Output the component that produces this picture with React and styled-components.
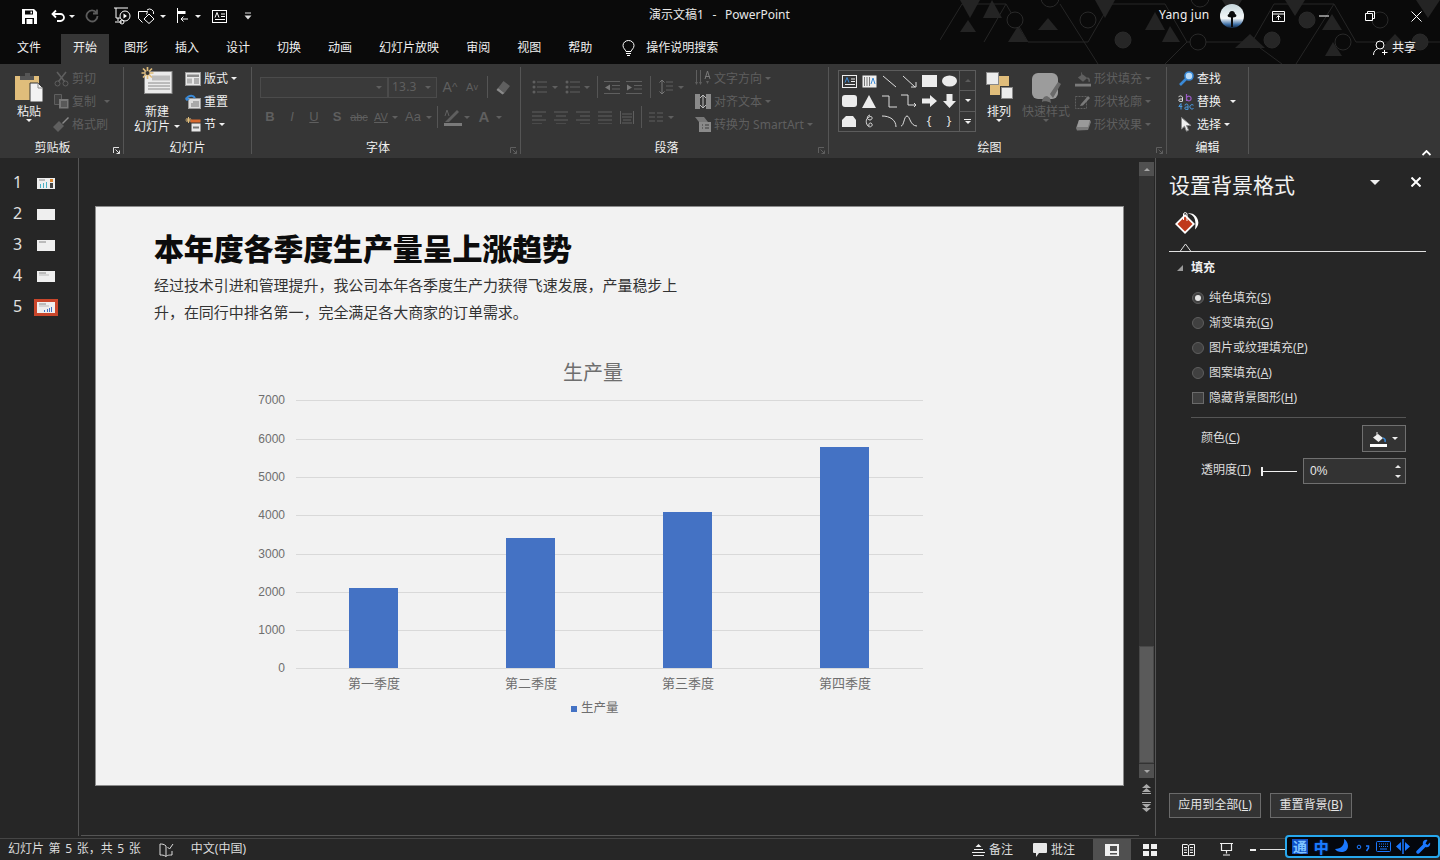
import React from 'react'
import styled, { createGlobalStyle } from 'styled-components'

const Global = createGlobalStyle`
  html, body { margin: 0; padding: 0; background: #262626; }
  * { box-sizing: border-box; }
  #root { width: 1440px; height: 860px; overflow: hidden; }
`;

const UI_FONT = `"Noto Sans", "Noto Sans CJK SC", sans-serif`;
const ON = '#f0f0f0';
const OFF = '#5f5f5f';

const Page = styled.div`
  position: relative;
  width: 1440px;
  height: 860px;
  display: flex;
  flex-direction: column;
  background: #262626;
  color: ${ON};
  font: 12px/16px ${UI_FONT};
  overflow: hidden;
`;

/* ---------- top bars ---------- */
const Top = styled.div`
  position: relative;
  height: 64px;
  background: #0a0a0a;
`;
const Pattern = styled.svg`
  position: absolute;
  left: 940px;
  top: 0;
`;
const TitleBar = styled.div`
  position: relative;
  height: 32px;
  display: flex;
  align-items: center;
`;
const Qat = styled.div`
  width: 649px;
  display: flex;
  align-items: center;
`;
const Slot = styled.div`
  flex: none;
  width: ${p => p.$w}px;
  margin-left: ${p => p.$ml || 0}px;
  display: flex;
  align-items: center;
  justify-content: center;
`;
const DocTitle = styled.div`
  white-space: pre;
  word-spacing: 1.2px;
  padding-bottom: 2px;
  color: #e8e8e8;
`;
const WinControls = styled.div`
  margin-left: auto;
  width: 281px;
  display: flex;
  align-items: center;
`;
const UserName = styled.div`
  width: 50px;
  white-space: nowrap;
  letter-spacing: 0.2px;
  padding-bottom: 2px;
`;
const TabRow = styled.div`
  position: relative;
  height: 32px;
  display: flex;
  align-items: flex-end;
  padding-left: 5px;
`;
const Tab = styled.div`
  height: 30px;
  line-height: 28px;
  padding: 0 12px;
  margin-right: ${p => p.$mr ?? 3}px;
  background: ${p => p.$active ? '#363636' : 'transparent'};
`;
const SearchTip = styled.div`
  height: 30px;
  display: flex;
  align-items: center;
  gap: 11px;
  margin-left: 15px;
  padding-bottom: 2px;
`;
const Share = styled.div`
  margin-left: auto;
  height: 30px;
  display: flex;
  align-items: center;
  gap: 4px;
  padding: 0 24px 2px 0;
`;

/* ---------- ribbon ---------- */
const Ribbon = styled.div`
  height: 94px;
  flex: none;
  background: #363636;
  padding-top: 3px;
  display: flex;
  align-items: flex-start;
`;
const Group = styled.div`
  position: relative;
  flex: none;
  width: ${p => p.$w}px;
  height: 87px;
  border-right: 1px solid #555555;
  display: flex;
  flex-direction: column;
`;
const GroupBody = styled.div`
  height: 69px;
  display: flex;
  padding-left: ${p => p.$pl || 0}px;
`;
const GroupLabel = styled.div`
  height: 18px;
  line-height: 24px;
  text-align: center;
  padding-right: ${p => p.$pr || 0}px;
  color: #f0f0f0;
`;
const Launcher = styled.svg`
  position: absolute;
  right: 3px;
  bottom: 0;
`;
const BigButton = styled.div`
  flex: none;
  width: ${p => p.$w}px;
  margin-left: ${p => p.$ml || 0}px;
  display: flex;
  flex-direction: column;
  align-items: center;
  color: ${p => p.$off ? OFF : ON};
`;
const BigIcon = styled.div`
  height: 37px;
  padding-top: ${p => p.$pt ?? 2}px;
`;
const BigText = styled.div`
  line-height: 15px;
  white-space: nowrap;
  display: flex;
  align-items: center;
  justify-content: center;
  gap: 4px;
`;
const SmallCol = styled.div`
  flex: none;
  margin-left: ${p => p.$ml || 0}px;
  display: flex;
  flex-direction: column;
`;
const SmallRow = styled.div`
  height: 23px;
  display: flex;
  align-items: center;
  white-space: nowrap;
  color: ${p => p.$off ? OFF : ON};
`;
const SmallIcon = styled.div`
  width: 16px;
  height: 16px;
  margin-right: 3px;
  display: flex;
  align-items: center;
  justify-content: center;
`;
const Caret = styled.i`
  flex: none;
  display: block;
  width: 0;
  height: 0;
  margin-left: ${p => p.$ml || 0}px;
  border-left: 3.5px solid transparent;
  border-right: 3.5px solid transparent;
  border-top: 3.5px solid ${p => p.$c || 'currentColor'};
`;
const CommandStack = styled.div`
  flex: none;
  width: ${p => p.$w}px;
  padding-top: 9px;
  color: ${OFF};
`;
const CommandRow = styled.div`
  height: 22px;
  margin-bottom: 8px;
  display: flex;
  align-items: center;
`;
const FontField = styled.div`
  width: ${p => p.$w}px;
  height: 21px;
  border: 1px solid #4b4b4b;
  background: #3a3a3a;
  display: flex;
  align-items: center;
  justify-content: flex-end;
  padding: 0 5px 0 3px;
  font-size: 12px;
`;
const FieldValue = styled.span`
  flex: 1;
  letter-spacing: 0.2px;
`;
const Glyph = styled.div`
  flex: none;
  width: ${p => p.$w || 22}px;
  margin-left: ${p => p.$ml || 0}px;
  display: flex;
  align-items: center;
  justify-content: center;
  font-family: "Liberation Sans", sans-serif;
  font-size: ${p => p.$size || 13}px;
  font-weight: ${p => p.$bold ? 700 : 400};
  font-style: ${p => p.$italic ? 'italic' : 'normal'};
  text-decoration: ${p => p.$line || 'none'};
`;
const VSep = styled.div`
  flex: none;
  width: 1px;
  height: 22px;
  margin: 0 ${p => p.$mr ?? 4}px 0 ${p => p.$ml ?? 4}px;
  background: #555555;
`;
const Gallery = styled.div`
  flex: none;
  width: 138px;
  height: 62px;
  margin: 3px 0 0 9px;
  border: 1px solid #5c5c5c;
  display: flex;
`;
const GalleryGrid = styled.div`
  flex: 1;
  display: grid;
  grid-template-columns: repeat(6, 20px);
  grid-auto-rows: 20px;
`;
const GalleryCell = styled.div`
  display: flex;
  align-items: center;
  justify-content: center;
  color: #e6e6e6;
  font-size: 12px;
  line-height: 12px;
`;
const GalleryScroll = styled.div`
  width: 16px;
  border-left: 1px solid #5c5c5c;
  display: flex;
  flex-direction: column;
`;
const GalleryBtn = styled.div`
  flex: 1;
  display: flex;
  flex-direction: column;
  gap: 1px;
  align-items: center;
  justify-content: center;
  color: ${p => p.$off ? '#5a5a5a' : '#f0f0f0'};
  border-bottom: ${p => p.$last ? 'none' : '1px solid #5c5c5c'};
`;
const CaretUp = styled(Caret)`
  border-top: none;
  border-bottom: 3.5px solid currentColor;
`;
const Bar = styled.i`
  display: block;
  width: 7px;
  height: 1px;
  background: currentColor;
`;
const RibbonEnd = styled.div`
  flex: 1;
  height: 91px;
  display: flex;
  align-items: flex-end;
  justify-content: flex-end;
  padding: 0 9px 2px 0;
`;

/* ---------- workspace ---------- */
const Workspace = styled.div`
  flex: none;
  height: 680px;
  display: flex;
`;
const Sidebar = styled.div`
  flex: none;
  width: 79px;
  height: 678px;
  border-right: 1px solid #555555;
  padding: 10px 0 0 13px;
`;
const ThumbRow = styled.div`
  height: 31px;
  display: flex;
  align-items: center;
`;
const ThumbNum = styled.div`
  width: 24px;
  padding-bottom: 3px;
  font-size: 16px;
  color: #e0e0e0;
`;
const Thumb = styled.div`
  width: 18px;
  height: 11px;
  background: #efefef;
  box-shadow: ${p => p.$active ? '0 0 0 3px #c9462b' : 'none'};
  display: flex;
`;
const Editor = styled.div`
  flex: none;
  width: 1077px;
  height: 678px;
  margin-bottom: 2px;
  border-right: 1px solid #555555;
  display: flex;
`;
const Canvas = styled.div`
  flex: 1;
  padding: 48px 0 0 16px;
  border-bottom: 1px solid #555555;
  margin-left: 2px;
`;
const Slide = styled.div`
  width: 1029px;
  height: 580px;
  margin-left: -2px;
  background: #f2f2f2;
  border: 1px solid #8c8c8c;
  padding: 20px 0 0 58px;
  color: #333333;
`;
const SlideTitle = styled.h1`
  margin: 0;
  font: 900 30px/40px "Noto Sans CJK SC", serif;
  letter-spacing: -0.15px;
  color: #0c0c0c;
`;
const SlideBody = styled.p`
  margin: 4px 0 0;
  width: 530px;
  font: 400 15px/27px "Noto Sans CJK SC", sans-serif;
  letter-spacing: -0.05px;
  color: #333333;
`;
const ChartBox = styled.svg`
  display: block;
  margin: 30px 0 0 86px;
`;
const ChartText = styled.text`
  font-family: ${p => p.$latin ? '"Liberation Sans"' : '"Noto Sans CJK SC"'}, sans-serif;
  font-size: ${p => p.$size || 12}px;
  fill: ${p => p.$fill || '#6e6e6e'};
  text-anchor: ${p => p.$anchor || 'middle'};
`;
const ScrollCol = styled.div`
  flex: none;
  width: 16px;
  padding-top: 4px;
  display: flex;
  flex-direction: column;
  align-items: flex-start;
`;
const ScrollBtn = styled.div`
  width: 15px;
  height: 14px;
  background: #505050;
  color: #a8a8a8;
  display: flex;
  align-items: center;
  justify-content: center;
`;
const ScrollTrack = styled.div`
  width: 15px;
  height: 588px;
  background: #333333;
  display: flex;
  flex-direction: column;
  justify-content: flex-end;
  padding-bottom: 1px;
`;
const ScrollThumb = styled.div`
  height: 117px;
  background: #5a5a5a;
  border: 1px solid #484848;
`;
const PageJump = styled.div`
  margin: ${p => p.$mt}px 0 0 3px;
  color: #a8a8a8;
  display: flex;
`;

/* ---------- format pane ---------- */
const Pane = styled.div`
  flex: 1;
  height: 680px;
  padding: 11px 14px 20px 13px;
  display: flex;
  flex-direction: column;
`;
const PaneHead = styled.div`
  height: 33px;
  display: flex;
  align-items: flex-start;
`;
const PaneTitle = styled.div`
  flex: 1;
  font-size: 21px;
  line-height: 32px;
  color: #f2f2f2;
`;
const PaneCaret = styled(Caret)`
  margin: 11px 31px 0 0;
  border-left-width: 5px;
  border-right-width: 5px;
  border-top-width: 5px;
  color: #f0f0f0;
`;
const PaneClose = styled.div`
  margin: 8px 5px 0 0;
  display: flex;
`;
const PaneTabs = styled.div`
  position: relative;
  height: 50px;
  padding: 9px 0 0 6px;
  border-bottom: 1px solid #e0e0e0;
`;
const Notch = styled.svg`
  position: absolute;
  left: 10px;
  bottom: -1px;
`;
const SectionHead = styled.div`
  height: 28px;
  padding: 4px 0 0 8px;
  display: flex;
  align-items: center;
  gap: 8px;
  font-weight: 700;
`;
const Options = styled.div`
  margin-top: 5px;
  padding-left: 23px;
`;
const Option = styled.label`
  height: 25px;
  display: flex;
  align-items: center;
  gap: 5px;
  color: #dcdcdc;
  white-space: nowrap;
`;
const Radio = styled.span`
  flex: none;
  width: 12px;
  height: 12px;
  border-radius: 50%;
  border: 1px solid #5e5e5e;
  background: #404040;
  display: flex;
  align-items: center;
  justify-content: center;
  &::after {
    content: '';
    width: 6px;
    height: 6px;
    border-radius: 50%;
    background: ${p => p.$on ? '#e4e4e4' : 'transparent'};
  }
`;
const Check = styled.span`
  flex: none;
  width: 12px;
  height: 12px;
  border: 1px solid #6a6a6a;
  background: #404040;
`;
const Acc = styled.span`
  text-decoration: underline;
  text-underline-offset: 1px;
`;
const PaneSep = styled.div`
  width: 215px;
  height: 1px;
  margin: 7px 0 0 22px;
  background: #555555;
`;
const FieldRow = styled.div`
  width: 205px;
  height: ${p => p.$h}px;
  margin: ${p => p.$mt}px 0 0 32px;
  display: flex;
  align-items: center;
  color: #dcdcdc;
`;
const FieldLabel = styled.div`
  width: ${p => p.$w}px;
  flex: none;
  white-space: nowrap;
  padding-bottom: 2px;
`;
const ColorBtn = styled.div`
  margin-left: auto;
  width: 44px;
  height: 27px;
  background: #333333;
  border: 1px solid #707070;
  display: flex;
  align-items: center;
  justify-content: center;
  gap: 5px;
  color: #f0f0f0;
`;
const Spin = styled.div`
  flex: none;
  width: 103px;
  height: 26px;
  margin-left: 6px;
  background: #333333;
  border: 1px solid #707070;
  padding: 0 4px 0 6px;
  display: flex;
  align-items: center;
  justify-content: space-between;
  font-family: "Liberation Sans", sans-serif;
  color: #e8e8e8;
`;
const SpinArrows = styled.div`
  display: flex;
  flex-direction: column;
  gap: 7px;
`;
const PaneFoot = styled.div`
  margin-top: auto;
  display: flex;
  gap: 9px;
`;
const FootBtn = styled.div`
  width: ${p => p.$w}px;
  height: 25px;
  line-height: 22px;
  text-align: center;
  border: 1px solid #6a6a6a;
  background: #333333;
  color: #e4e4e4;
  white-space: nowrap;
`;

/* ---------- status bar ---------- */
const Status = styled.div`
  flex: none;
  height: 22px;
  border-top: 1px solid #454545;
  padding-left: 8px;
  display: flex;
  align-items: center;
  color: #dcdcdc;
`;
const StatusLeft = styled.div`
  white-space: pre;
  word-spacing: 1.5px;
  padding-bottom: 1px;
`;
const Lang = styled(StatusLeft)`
  margin-left: 16px;
`;
const StatusRight = styled.div`
  margin-left: auto;
  width: 468px;
  height: 100%;
  display: flex;
  align-items: center;
`;
const StatusAction = styled.div`
  flex: none;
  width: ${p => p.$w}px;
  display: flex;
  align-items: center;
  gap: 4px;
`;
const ViewBtn = styled.div`
  flex: none;
  width: 38px;
  height: 100%;
  background: ${p => p.$active ? '#505050' : 'transparent'};
  display: flex;
  align-items: center;
  justify-content: center;
`;
const ZoomBar = styled.div`
  display: flex;
  align-items: center;
  gap: 4px;
  margin-left: 5px;
`;
const ZoomMinus = styled.i`
  display: block;
  width: 6px;
  height: 2px;
  background: #f0f0f0;
`;
const ZoomLine = styled.i`
  display: block;
  width: 30px;
  height: 1px;
  background: #e0e0e0;
`;
const Ime = styled.div`
  position: absolute;
  right: 0;
  bottom: 2px;
  width: 155px;
  height: 23px;
  background: #04070d;
  border: 2px solid #27a8ee;
  border-radius: 4px;
  display: flex;
  align-items: center;
  justify-content: space-between;
  padding: 0 7px 0 5px;
  color: #1a78ff;
`;
const ImeMode = styled.span`
  width: 16px;
  height: 15px;
  background: #0f4fc4;
  color: #7ec4ff;
  font: 700 14px/15px "Noto Sans CJK SC", sans-serif;
  text-align: center;
`;
const ImeText = styled.span`
  font: 700 15px/15px "Noto Sans CJK SC", sans-serif;
  color: #1a7cff;
  text-shadow: 0 0 2px #0a4ac0;
`;

/* ---------- icons ---------- */
const Ico = ({ w = 16, h = 16, vb, children, ...rest }) => (
  <svg width={w} height={h} viewBox={vb || `0 0 ${w} ${h}`} fill="none" style={{ display: 'block' }} {...rest}>{children}</svg>
);

const Save = () => (
  <Ico w={15} h={15}>
    <path d="M0 0h12l3 3v12H0z" fill="#fff" />
    <path d="M3 1.500h8v4H3zM3 9h9v6H3z" fill="#0a0a0a" />
    <path d="M8.500 2.500h1.500v2H8.500zM4.500 10h6v5h-6z" fill="#fff" />
  </Ico>
);
const Undo = ({ c = '#fff' }) => (
  <Ico w={15} h={14}>
    <path d="M5 1.500 1.500 5 5 8.500M2 5h7.500a3.500 3.500 0 0 1 0 7H6" stroke={c} strokeWidth="1.800" />
  </Ico>
);
const Redo = () => (
  <Ico w={14} h={14}>
    <path d="M11.500 3.800A5.500 5.500 0 1 0 12.500 7M12 0.500V4.500H8" stroke="#5c5c5c" strokeWidth="1.800" />
  </Ico>
);
const Present = () => (
  <Ico w={17} h={18}>
    <path d="M0 1h14M2 1v10h4M4 11v3M1 15h7" stroke="#fff" />
    <circle cx="11" cy="9" r="5" stroke="#fff" />
    <path d="M9.500 6.500 13 9l-3.500 2.500z" fill="#fff" />
    <circle cx="8" cy="15" r="2" stroke="#fff" />
  </Ico>
);
const ShapeMix = () => (
  <Ico w={18} h={16}>
    <path d="M0.500 3.500h9l-1 3M4.500 14.500 0.500 10.500V3.500" stroke="#fff" />
    <path d="m11 6 5 5-5 4.500-5-4.500z" stroke="#fff" />
    <path d="M9 2a4 4 0 0 1 6.500 4" stroke="#fff" />
  </Ico>
);
const AlignIco = () => (
  <Ico w={14} h={16}>
    <path d="M1.500 0v15" stroke="#fff" />
    <path d="M1.500 3h8v3h-8z" fill="#fff" />
    <path d="M12 11H5M7.500 8.500 5 11l2.500 2.500" stroke="#fff" />
  </Ico>
);
const TextBoxIco = ({ c = '#fff', a = '#fff' }) => (
  <Ico w={15} h={13}>
    <rect x="0.500" y="0.500" width="14" height="12" stroke={c} />
    <path d="M3 7.500 5 2.500l2 5" stroke={a} />
    <path d="M9 4h4M9 6.500h4M3 9.500h10" stroke={c} />
  </Ico>
);
const Customize = () => (
  <Ico w={8} h={8}>
    <path d="M1 1h6" stroke="#ddd" />
    <path d="M0.500 3.500h7L4 7.500z" fill="#ddd" />
  </Ico>
);
const Avatar = () => (
  <Ico w={24} h={24}>
    <defs>
      <linearGradient id="sky" x1="0" y1="0" x2="0" y2="1">
        <stop offset="0" stopColor="#c8d8de" />
        <stop offset="0.6" stopColor="#f4f7f8" />
        <stop offset="0.85" stopColor="#3e6fa6" />
        <stop offset="1" stopColor="#10233c" />
      </linearGradient>
    </defs>
    <circle cx="12" cy="12" r="12" fill="url(#sky)" />
    <path d="M12 7c2 0 3 1.500 3 3 1.500.5 2 2 .5 3l-2.500.5V23h-2v-9.500L8.500 13c-1.500-1-1-2.500.5-3 0-1.500 1-3 3-3z" fill="#0b0b0b" />
  </Ico>
);
const RibbonOpts = () => (
  <Ico w={13} h={11}>
    <path d="M.5.5h12v10H.5zM.5 3h12" stroke="#fff" />
    <path d="M6.500 9V4.500M4.500 6.500l2-2 2 2" stroke="#fff" />
  </Ico>
);
const Minimize = () => <Ico w={10} h={2}><path d="M0 1h10" stroke="#fff" /></Ico>;
const Restore = () => (
  <Ico w={10} h={10}>
    <path d="M.5 2.500h7v7h-7zM2.500 2.500V.5h7v7h-2" stroke="#fff" />
  </Ico>
);
const CloseX = ({ s = 10, sw = 1, c = '#fff' }) => (
  <Ico w={s} h={s}>
    <path d={`M.5.5l${s - 1} ${s - 1}M${s - .5} .5l-${s - 1} ${s - 1}`} stroke={c} strokeWidth={sw} />
  </Ico>
);
const Bulb = () => (
  <Ico w={13} h={17}>
    <path d="M4 11.500C3.500 9.500 1 8.500 1 5.500a5.500 5 0 0 1 11 0c0 3-2.500 4-3 6z" stroke="#fff" />
    <path d="M4 13.500h5M5 15.500h3" stroke="#fff" />
  </Ico>
);
const ShareIco = () => (
  <Ico w={15} h={16}>
    <circle cx="7" cy="5" r="4" stroke="#fff" />
    <path d="M.5 15c0-3.500 2-5.500 4-6M11.500 10v5M9 12.500h5.500" stroke="#fff" />
  </Ico>
);
const Launch = ({ c = '#e0e0e0' }) => (
  <Launcher width="7" height="7" viewBox="0 0 7 7" fill="none">
    <path d="M.5 6V.5H6" stroke={c} />
    <path d="M2.500 2.500 6.500 6.500M6.500 3.500v3h-3" stroke={c} />
  </Launcher>
);
const Paste = () => (
  <Ico w={28} h={30}>
    <path d="M0 4h10V1.500h5V4h9v24H0z" fill="#e0bd7b" />
    <path d="M5 4h14v4H5z" fill="#555" />
    <path d="M10 1h5v3h-5z" fill="#555" />
    <path d="M15 11h8l5 5v14H15z" fill="#f2f2f2" stroke="#363636" />
    <path d="M23 11v5h5" stroke="#888" />
  </Ico>
);
const Scissors = ({ c = OFF }) => (
  <Ico w={15} h={16}>
    <circle cx="3.500" cy="12.500" r="2.500" stroke={c} />
    <circle cx="11.500" cy="12.500" r="2.500" stroke={c} />
    <path d="M4.500 10.500 12 1M10.500 10.500 3 1" stroke={c} strokeWidth="1.600" />
  </Ico>
);
const CopyIco = ({ c = OFF }) => (
  <Ico w={15} h={15}>
    <path d="M.5.5h7v10h-7z" stroke={c} fill={c} fillOpacity=".25" />
    <path d="M5 5h9.500v9.500H5z" fill="#777" />
    <path d="M7 8h6M7 10h6M7 12h6" stroke="#3a3a3a" />
  </Ico>
);
const Brush = ({ c = OFF }) => (
  <Ico w={16} h={15}>
    <path d="M0 10 6 4l5 5-6 6z" fill={c} />
    <path d="m9 6 6-6 1 1-6 6z" fill="#8a8a8a" />
  </Ico>
);
const NewSlide = () => (
  <Ico w={32} h={28}>
    <rect x="3.500" y="4.500" width="27.500" height="22" fill="#ebebeb" stroke="#888" />
    <path d="M11 8.500h18v5H11z" fill="#bdbdbd" />
    <path d="M7 16h22M7 19h22M7 22h22" stroke="#8a8a8a" />
    <path d="M6.500 0v12M.5 6h12M2 1.500l9 9M11 1.500l-9 9" stroke="#e0bd7b" strokeWidth="1.700" />
    <circle cx="6.500" cy="6" r="2" fill="#363636" />
  </Ico>
);
const Layout = () => (
  <Ico w={16} h={14}>
    <rect x=".5" y=".5" width="15" height="13" fill="#e8e8e8" stroke="#999" />
    <path d="M2 2.500h12V5H2z" fill="#8a8a8a" />
    <path d="M2 6.500h5v5H2z" fill="#b5b5b5" />
    <path d="M9 7h5M9 9h5M9 11h5" stroke="#777" />
  </Ico>
);
const ResetIco = () => (
  <Ico w={16} h={15}>
    <rect x="3.500" y="4.500" width="12" height="10" fill="#dcdcdc" stroke="#999" />
    <path d="M8 8h6M6 10h8M6 12h8" stroke="#777" />
    <path d="M1.500 6A4.500 4 0 0 1 10 4" stroke="#3a8ad8" strokeWidth="2" />
    <path d="M0 3.500 1.500 7 5 5.500z" fill="#3a8ad8" />
  </Ico>
);
const SectionIco = () => (
  <Ico w={16} h={15}>
    <path d="M3.500 0v6M.5 3h6M1.500 1l4 4M5.500 1l-4 4" stroke="#e0bd7b" />
    <rect x="5.500" y="2.500" width="10" height="3" fill="#d9692e" />
    <rect x="6.500" y="6.500" width="9" height="8" fill="#e8e8e8" />
    <path d="M8 10.500h6" stroke="#777" strokeWidth="2" />
  </Ico>
);
const Eraser = ({ c = OFF }) => (
  <Ico w={16} h={16}>
    <path d="M8.500 2 15 7l-5.500 7L3 9z" fill={c} />
    <path d="m3 9 6.500 5-2 1.500L1.500 11z" fill="#8a8a8a" />
  </Ico>
);
const Underbar = ({ c = OFF }) => (
  <Ico w={18} h={17}>
    <path d="M3 11 13 1l2 2L5 13H1z" fill={c} />
    <path d="M0 14h18v3H0z" fill="#7a7a7a" />
    <path d="M1 7 3 1l2 6" stroke={c} />
  </Ico>
);
const Lines = ({ d, w = 14, h = 13, c = OFF }) => <Ico w={w} h={h}><path d={d} stroke={c} /></Ico>;
const Bullets = ({ c = OFF }) => (
  <Ico w={15} h={14}>
    <circle cx="2" cy="2" r="1.500" fill={c} />
    <circle cx="2" cy="7" r="1.500" fill={c} />
    <circle cx="2" cy="12" r="1.500" fill={c} />
    <path d="M5 2h10M5 7h10M5 12h10" stroke={c} />
  </Ico>
);
const Indent = ({ flip }) => (
  <Ico w={16} h={13}>
    <path d="M0 .5h16M8 4.500h8M8 8h8M0 12.500h16" stroke={OFF} />
    <path d={flip ? 'M1 3.500v6l5-3z' : 'M6 3.500v6L1 6.500z'} fill="#777" />
  </Ico>
);
const LineSpace = () => (
  <Ico w={14} h={16}>
    <path d="M3 1v14M.5 3.500 3 1l2.500 2.500M.5 12.500 3 15l2.500-2.500" stroke="#777" />
    <path d="M7 3h7M7 7h7M7 11h7" stroke={OFF} />
  </Ico>
);
const TextDir = () => (
  <Ico w={16} h={17}>
    <path d="M1.500 0v12M5.500 0v12" stroke={OFF} />
    <path d="M10 9 12.500 1 15 9M10.500 6.500h4" stroke="#7a7a7a" />
    <path d="M0 12l1.500 3 1.500-3zM4 12l1.500 3 1.500-3zM11 11l1.500 3 1.500-3z" fill={OFF} />
  </Ico>
);
const AlignText = () => (
  <Ico w={16} h={15}>
    <path d="M0 0h5v15H0zM11 0h5v15h-5z" fill="#8a8a8a" />
    <path d="M8 1v13M5 4 8 1l3 3M5 11l3 3 3-3" stroke="#bdbdbd" />
  </Ico>
);
const Smart = () => (
  <Ico w={16} h={15}>
    <path d="M0 0h9l4 5H4z" fill="#777" />
    <path d="M4 5h12v10H4z" fill="#8a8a8a" />
    <path d="M7 8h1M7 11h1M10 8h4M10 11h4" stroke="#3a3a3a" />
  </Ico>
);
const BucketSmall = ({ c = OFF, bar = '#7a7a7a', drop = c }) => (
  <Ico w={17} h={16}>
    <path d="M7 1v4" stroke={c} />
    <path d="M3 6.500 8 3l5 4-4.500 4z" fill={c} />
    <path d="M13 7c2 .5 2.500 2 2 4" stroke={drop} strokeWidth="1.500" />
    <path d="M0 13h17v3H0z" fill={bar} />
  </Ico>
);
const Pen = () => (
  <Ico w={16} h={15}>
    <path d="M.5 2.500h11v12H.5z" stroke={OFF} strokeDasharray="2 1" />
    <path d="M6 10 13 2l2 2-7 7.500-3 .5z" fill="#7a7a7a" />
  </Ico>
);
const Effect = () => (
  <Ico w={15} h={12}>
    <path d="M3 1h11l1 2-3 8-11 .5L0 9z" fill="#7a7a7a" />
    <path d="M3 1h11l-2 7H1z" fill="#9a9a9a" />
  </Ico>
);
const Arrange = () => (
  <Ico w={27} h={28}>
    <rect x=".5" y=".5" width="12" height="12" fill="#ececec" stroke="#8a8a8a" />
    <rect x="13" y="4" width="10" height="10" fill="#e0bd7b" />
    <rect x="4" y="13" width="10" height="10" fill="#e0bd7b" />
    <rect x="15.500" y="15.500" width="11" height="11" fill="#ececec" stroke="#8a8a8a" />
  </Ico>
);
const QuickStyle = () => (
  <Ico w={30} h={30}>
    <rect x="1" y="0" width="26" height="26" rx="6" fill="#9c9c9c" />
    <path d="M20 30c-3-2-8-2-9-1 0-3 2-6 5-6l3 2zM19 21 27 9l3 2-8 14z" fill="#6a6a6a" />
  </Ico>
);
const Finder = () => (
  <Ico w={15} h={15}>
    <circle cx="10" cy="5" r="4" fill="#bcdcf7" stroke="#3a8ad8" strokeWidth="1.600" />
    <path d="M7 8 1 14" stroke="#3a8ad8" strokeWidth="2.600" />
  </Ico>
);
const ReplaceIco = () => (
  <Ico w={16} h={16}>
    <path d="M.5 3.200a2.200 2.200 0 0 1 4 0v4M4.500 5H2a1.200 1.200 0 0 0 0 2.400h2.500" stroke="#dcdcdc" />
    <path d="M8.500 0v7M8.500 4.500a2.300 2.300 0 1 1 0 .1" stroke="#9a5cc6" strokeWidth="1.200" />
    <path d="M3 9.500.8 12.500h3.500M3 9.500v6" stroke="#4a9ae0" />
    <path d="M7 11.500a1.500 1.500 0 0 1 3 0v4M10 13H8a1.200 1.200 0 0 0 0 2.400h2" stroke="#4a9ae0" />
    <path d="M15.500 11.200a2.200 2.200 0 1 0 0 3.300" stroke="#4a9ae0" />
  </Ico>
);
const Pointer = () => (
  <Ico w={11} h={15}>
    <path d="M.5.500v11.500l3-2.800 2 5 2-1-2-4.700h4.500z" fill="#f0f0f0" stroke="#8a8a8a" />
  </Ico>
);
const Bucket = () => (
  <Ico w={24} h={23}>
    <path d="M10 3 20 13 10 23 0 13z" fill="#fff" />
    <path d="M10 5.500 17.500 13 10 20.500 2.500 13z" fill="#c0391b" />
    <path d="M8.500 9V3a1.800 1.800 0 0 1 3.500 0v7" stroke="#fff" />
    <path d="M13 2.500c5 .5 9 5 7 16 3-3 4-6 3-9-1-4-5-8-10-7z" fill="#fff" />
  </Ico>
);
const DoubleUp = () => (
  <Ico w={9} h={11}>
    <path d="M4.500 0 9 4H0zM4.500 4 9 8H0z" fill="currentColor" />
    <path d="M0 9.500h9" stroke="currentColor" />
  </Ico>
);
const DoubleDown = () => (
  <Ico w={9} h={11}>
    <path d="M0 1.500h9" stroke="currentColor" />
    <path d="M0 3h9L4.500 7zM0 7h9l-4.500 4z" fill="currentColor" />
  </Ico>
);
const Slider = () => (
  <Ico w={36} h={9}>
    <path d="M1 4.500h35" stroke="#f0f0f0" />
    <path d="M1 0v9" stroke="#f0f0f0" strokeWidth="2" />
  </Ico>
);
const Proof = () => (
  <Ico w={15} h={14}>
    <path d="M7 3C5 1 3 1 1 1v11c2 0 4 0 6 1.500M7 3v10.500M7 13.500c1-1 2-1.500 6-1.500V8" stroke="#dcdcdc" />
    <path d="m8.500 4 2 2 3.500-5" stroke="#dcdcdc" />
  </Ico>
);
const NotesIco = () => (
  <Ico w={13} h={12}>
    <path d="m6.500 0 3 3h-6z" fill="#f0f0f0" />
    <path d="M2 5.500h9M0 8.500h13M1 11.500h11" stroke="#f0f0f0" />
  </Ico>
);
const CommentIco = () => (
  <Ico w={14} h={14}>
    <path d="M1 0h12a1 1 0 0 1 1 1v8a1 1 0 0 1-1 1H6l-3 4v-4H1a1 1 0 0 1-1-1V1a1 1 0 0 1 1-1z" fill="#e8e8e8" />
  </Ico>
);
const NormalView = () => (
  <Ico w={14} h={12}>
    <path d="M0 0h14v12H0z" fill="#f0f0f0" />
    <path d="M5 2h7v5H5zM5 9h7v1.500H5z" fill="#505050" />
  </Ico>
);
const SorterView = () => (
  <Ico w={14} h={12}>
    <path d="M0 0h6v5H0zM8 0h6v5H8zM0 7h6v5H0zM8 7h6v5H8z" fill="#f0f0f0" />
  </Ico>
);
const ReadingView = () => (
  <Ico w={13} h={12}>
    <path d="M.5.5h4.500l1.500 1 1.500-1H12.500v11H8l-1.500.5L5 11.500H.5zM6.500 1.500V12" stroke="#f0f0f0" />
    <path d="M2 3.500h3M2 6h3M2 8.500h3M8 3.500h3M8 6h3M8 8.500h3" stroke="#f0f0f0" />
  </Ico>
);
const ShowView = () => (
  <Ico w={13} h={13}>
    <path d="M0 .5h13M1.500.5v7h10v-7M6.500 7.500v3M3 12h7" stroke="#f0f0f0" strokeWidth="1.200" />
  </Ico>
);

const patternCircles = [
  [75, 20, 8, 0], [148, 20, 8, 0], [183, 40, 8, 1], [258, 42, 8, 0], [332, 40, 8, 1], [367, 20, 8, 1],
  [403, 42, 8, 0], [440, 20, 8, 0], [110, -2, 9, 0], [260, -2, 9, 0], [480, 42, 8, 1],
];
const patternTris = [
  '43,18 62,18 52,0', '68,42 88,42 78,26', '20,0 40,0 30,18', '98,30 118,30 108,18',
  '155,0 175,0 165,18', '205,30 225,30 215,12', '282,0 302,0 292,16', '222,42 240,42 230,26',
  '345,0 365,0 355,16', '382,30 402,30 392,14', '295,48 325,48 310,34', '385,56 402,56 393,42', '440,50 470,50 455,34', '476,0 500,0 488,18', '20,32 36,32 28,20',
];
const patternLines = 'M0 40 22 4M22 4h44M66 4 88 42M88 42h60M148 42 170 4M170 4h55M225 4l22 38M247 42h65M312 42 334 4M334 4h60M394 4l22 38M416 42h84M44 42 66 4M120 4 158 64M225 64 247 42M312 42l30 22M394 4 356 64';

const tabs = ['图形', '插入', '设计', '切换', '动画', '幻灯片放映', '审阅', '视图', '帮助'];

const gallery = [
  <TextBoxIco c="#eee" a="#3a8ad8" />,
  <Ico w={15} h={13}><rect x=".5" y=".5" width="14" height="12" fill="#eee" /><path d="M2.500 2v9M5 2v9M7.500 2v9" stroke="#777" /><path d="M9 9l2-6 2 6" stroke="#3a8ad8" /></Ico>,
  <Ico w={15} h={13}><path d="M1 1l13 11" stroke="#ddd" /></Ico>,
  <Ico w={15} h={13}><path d="M1 1l12 11M9 12h5V7" stroke="#ddd" /></Ico>,
  <Ico w={15} h={12}><rect width="15" height="12" fill="#ececec" /></Ico>,
  <Ico w={15} h={12}><ellipse cx="7.500" cy="6" rx="7.500" ry="5.500" fill="#ececec" /></Ico>,
  <Ico w={15} h={12}><rect width="15" height="12" rx="3" fill="#ececec" /></Ico>,
  <Ico w={14} h={13}><path d="M7 0l7 13H0z" fill="#ececec" /></Ico>,
  <Ico w={15} h={13}><path d="M0 1h7v11h8" stroke="#ddd" /></Ico>,
  <Ico w={16} h={14}><path d="M0 1h7v10h8M13 9l2 2-2 2" stroke="#ddd" /></Ico>,
  <Ico w={15} h={12}><path d="M0 3.500h8V0l7 6-7 6V8.500H0z" fill="#ececec" /></Ico>,
  <Ico w={13} h={14}><path d="M3.500 0h6v7H13l-6.500 7L0 7h3.500z" fill="#ececec" /></Ico>,
  <Ico w={14} h={11}><path d="M0 11V4l4-4h7l3 4v7z" fill="#ececec" /></Ico>,
  <Ico w={10} h={15}><path d="M6 1C2 2 3 6 6 6S9 1 5 3 2 10 4 12s5 0 4-2-4-1-3 2" stroke="#ddd" /></Ico>,
  <Ico w={15} h={12}><path d="M0 1c8 0 14 4 14 11" stroke="#ddd" /></Ico>,
  <Ico w={16} h={12}><path d="M0 11c3 0 3-10 6-10s3 10 10 10" stroke="#ddd" /></Ico>,
  '{',
  '}',
];

const ticks = [7000, 6000, 5000, 4000, 3000, 2000, 1000, 0];
const bars = [
  { name: '第一季度', x: 109, v: 2100 },
  { name: '第二季度', x: 266, v: 3400 },
  { name: '第三季度', x: 423, v: 4100 },
  { name: '第四季度', x: 580, v: 5800 },
];
const yOf = v => 313.4 - v * 268 / 7000;

const Chart = () => (
  <ChartBox width="700" height="370" viewBox="0 0 700 370">
    <ChartText x="353" y="25" $size={20}>生产量</ChartText>
    {ticks.map(t => (
      <g key={t}>
        <path d={`M56 ${Math.round(yOf(t)) + .5}H683`} stroke="#d9d9d9" />
        <ChartText x="45" y={yOf(t) + 4} $latin $anchor="end">{t}</ChartText>
      </g>
    ))}
    {bars.map(b => {
      const top = Math.round(yOf(b.v) + .2)
      return (
        <g key={b.name}>
          <rect x={b.x} y={top} width="49" height={313 - top} fill="#4472c4" />
          <ChartText x={b.x + 25} y="332.500" $size={13}>{b.name}</ChartText>
        </g>
      )
    })}
    <rect x="331" y="351" width="6" height="6" fill="#4472c4" />
    <ChartText x="341" y="357" $size={12.500} $anchor="start">生产量</ChartText>
  </ChartBox>
);

const thumbArt = [
  <Ico w={18} h={11}><path d="M2 2h6" stroke="#888" /><path d="M3 6h1v4H3zM6 5h1v5H6zM9 4h1v6H9z" fill="#4ab0c4" /><path d="M13 1h3v3h-3z" fill="#d9862e" /><path d="M13 5h3v5h-3z" fill="#444" /></Ico>,
  null,
  <Ico w={18} h={11}><path d="M2 2h7" stroke="#888" /></Ico>,
  <Ico w={18} h={11}><path d="M2 2h7" stroke="#888" /><path d="M2 4h10" stroke="#bbb" /></Ico>,
  <Ico w={18} h={11}><path d="M2 2h7" stroke="#888" /><path d="M2 4h10" stroke="#bbb" /><path d="M7 8h1v2H7zM10 7h1v3h-1zM12 6h1v4h-1zM14 5h1v5h-1z" fill="#4472c4" /></Ico>,
];

const options = [
  ['纯色填充', 'S', true],
  ['渐变填充', 'G'],
  ['图片或纹理填充', 'P'],
  ['图案填充', 'A'],
];

const App = () => (
  <Page>
    <Global />
    <Top>
      <Pattern width="500" height="64" viewBox="0 0 500 64" fill="none">
        <path d={patternLines} stroke="#262626" />
        {patternTris.map(p => <polygon key={p} points={p} fill="#242424" />)}
        {patternCircles.map(([x, y, r, solid]) => (
          <circle key={`${x}-${y}`} cx={x} cy={y} r={r} fill={solid ? '#262626' : '#0a0a0a'} stroke="#2a2a2a" />
        ))}
      </Pattern>
      <TitleBar>
        <Qat>
          <Slot $w={22} $ml={18}><Save /></Slot>
          <Slot $w={20} $ml={8}><Undo /></Slot>
          <Slot $w={8}><Caret /></Slot>
          <Slot $w={20} $ml={6}><Redo /></Slot>
          <Slot $w={20} $ml={10}><Present /></Slot>
          <Slot $w={20} $ml={5}><ShapeMix /></Slot>
          <Slot $w={8} $ml={2}><Caret /></Slot>
          <Slot $w={20} $ml={6}><AlignIco /></Slot>
          <Slot $w={8} $ml={1}><Caret /></Slot>
          <Slot $w={20} $ml={7}><TextBoxIco /></Slot>
          <Slot $w={10} $ml={14}><Customize /></Slot>
        </Qat>
        <DocTitle>演示文稿1  -  PowerPoint</DocTitle>
        <WinControls>
          <UserName>Yang jun</UserName>
          <Slot $w={24} $ml={11}><Avatar /></Slot>
          <Slot $w={46} $ml={11}><RibbonOpts /></Slot>
          <Slot $w={46}><Minimize /></Slot>
          <Slot $w={46}><Restore /></Slot>
          <Slot $w={46}><CloseX s={11} /></Slot>
        </WinControls>
      </TitleBar>
      <TabRow>
        <Tab $mr={8}>文件</Tab>
        <Tab $active>开始</Tab>
        {tabs.map(t => <Tab key={t}>{t}</Tab>)}
        <SearchTip><Bulb />操作说明搜索</SearchTip>
        <Share><ShareIco />共享</Share>
      </TabRow>
    </Top>

    <Ribbon>
      <Group $w={124}>
        <GroupBody>
          <BigButton $w={28} $ml={15}>
            <BigIcon $pt={5}><Paste /></BigIcon>
            <BigText>粘贴</BigText>
            <BigText><Caret /></BigText>
          </BigButton>
          <SmallCol $ml={10}>
            <SmallRow $off><SmallIcon><Scissors /></SmallIcon>剪切</SmallRow>
            <SmallRow $off><SmallIcon><CopyIco /></SmallIcon>复制<Caret $ml={8} /></SmallRow>
            <SmallRow $off><SmallIcon><Brush /></SmallIcon>格式刷</SmallRow>
          </SmallCol>
        </GroupBody>
        <GroupLabel $pr={18}>剪贴板</GroupLabel>
        <Launch />
      </Group>
      <Group $w={128}>
        <GroupBody>
          <BigButton $w={50} $ml={8}>
            <BigIcon $pt={0}><NewSlide /></BigIcon>
            <BigText>新建</BigText>
            <BigText>幻灯片<Caret /></BigText>
          </BigButton>
          <SmallCol $ml={3}>
            <SmallRow><SmallIcon><Layout /></SmallIcon>版式<Caret $ml={3} /></SmallRow>
            <SmallRow><SmallIcon><ResetIco /></SmallIcon>重置</SmallRow>
            <SmallRow><SmallIcon><SectionIco /></SmallIcon>节<Caret $ml={3} /></SmallRow>
          </SmallCol>
        </GroupBody>
        <GroupLabel>幻灯片</GroupLabel>
      </Group>
      <Group $w={269}>
        <GroupBody $pl={8}>
          <CommandStack $w={260}>
            <CommandRow>
              <FontField $w={128}><Caret /></FontField>
              <FontField $w={49}><FieldValue>13.3</FieldValue><Caret /></FontField>
              <Glyph $ml={2} $size={14}>A<sup>^</sup></Glyph>
              <Glyph $size={11}>A<sup>v</sup></Glyph>
              <VSep $ml={4} $mr={7} />
              <Eraser />
            </CommandRow>
            <CommandRow>
              <Glyph $ml={-1} $bold>B</Glyph>
              <Glyph $italic>I</Glyph>
              <Glyph $line="underline">U</Glyph>
              <Glyph $ml={1} $bold>S</Glyph>
              <Glyph $size={11} $line="line-through">abc</Glyph>
              <Glyph $size={11} $line="underline">AV</Glyph>
              <Caret />
              <Glyph $ml={4}>Aa</Glyph>
              <Caret $ml={2} />
              <VSep $ml={5} $mr={6} />
              <Underbar />
              <Caret $ml={2} />
              <Glyph $w={20} $ml={4} $size={15} $bold>A</Glyph>
              <Caret $ml={2} />
            </CommandRow>
          </CommandStack>
        </GroupBody>
        <GroupLabel $pr={16}>字体</GroupLabel>
        <Launch c="#5f5f5f" />
      </Group>
      <Group $w={308}>
        <GroupBody $pl={7}>
          <CommandStack $w={167}>
            <CommandRow>
              <Glyph><Bullets /></Glyph>
              <Caret $ml={2} />
              <Glyph $ml={3}><Bullets /></Glyph>
              <Caret $ml={1} />
              <VSep $ml={7} $mr={3} />
              <Glyph><Indent /></Glyph>
              <Glyph><Indent flip /></Glyph>
              <VSep $ml={5} $mr={4} />
              <Glyph><LineSpace /></Glyph>
              <Caret $ml={1} />
            </CommandRow>
            <CommandRow>
              <Glyph><Lines d="M0 1h14M0 5h10M0 9h14M0 13h10" /></Glyph>
              <Glyph><Lines d="M0 1h14M2 5h10M0 9h14M2 13h10" /></Glyph>
              <Glyph><Lines d="M0 1h14M4 5h10M0 9h14M4 13h10" /></Glyph>
              <Glyph><Lines d="M0 1h14M0 5h14M0 9h14M0 13h14" /></Glyph>
              <Glyph><Lines d="M.5 0v13M13.500 0v13M2 3h10M2 6h10M2 12h10M3 9h8" /></Glyph>
              <VSep $ml={3} $mr={3} />
              <Glyph><Lines d="M0 2h6M0 6h6M0 10h6M8 2h6M8 6h6M8 10h6" /></Glyph>
              <Caret $ml={1} />
            </CommandRow>
          </CommandStack>
          <SmallCol>
            <SmallRow $off><SmallIcon><TextDir /></SmallIcon>文字方向<Caret $ml={3} /></SmallRow>
            <SmallRow $off><SmallIcon><AlignText /></SmallIcon>对齐文本<Caret $ml={3} /></SmallRow>
            <SmallRow $off><SmallIcon><Smart /></SmallIcon>转换为 SmartArt<Caret $ml={3} /></SmallRow>
          </SmallCol>
        </GroupBody>
        <GroupLabel $pr={16}>段落</GroupLabel>
        <Launch c="#5f5f5f" />
      </Group>
      <Group $w={338}>
        <GroupBody>
          <Gallery>
            <GalleryGrid>
              {gallery.map((g, i) => <GalleryCell key={i}>{g}</GalleryCell>)}
            </GalleryGrid>
            <GalleryScroll>
              <GalleryBtn $off><CaretUp /></GalleryBtn>
              <GalleryBtn><Caret /></GalleryBtn>
              <GalleryBtn $last><Bar /><Caret /></GalleryBtn>
            </GalleryScroll>
          </Gallery>
          <BigButton $w={30} $ml={8}>
            <BigIcon $pt={5}><Arrange /></BigIcon>
            <BigText>排列</BigText>
            <BigText><Caret /></BigText>
          </BigButton>
          <BigButton $w={50} $ml={7} $off>
            <BigIcon $pt={6}><QuickStyle /></BigIcon>
            <BigText>快速样式</BigText>
            <BigText><Caret /></BigText>
          </BigButton>
          <SmallCol $ml={4}>
            <SmallRow $off><SmallIcon><BucketSmall /></SmallIcon>形状填充<Caret $ml={3} /></SmallRow>
            <SmallRow $off><SmallIcon><Pen /></SmallIcon>形状轮廓<Caret $ml={3} /></SmallRow>
            <SmallRow $off><SmallIcon><Effect /></SmallIcon>形状效果<Caret $ml={3} /></SmallRow>
          </SmallCol>
        </GroupBody>
        <GroupLabel $pr={16}>绘图</GroupLabel>
        <Launch c="#5f5f5f" />
      </Group>
      <Group $w={82}>
        <GroupBody $pl={11}>
          <SmallCol>
            <SmallRow><SmallIcon><Finder /></SmallIcon>查找</SmallRow>
            <SmallRow><SmallIcon><ReplaceIco /></SmallIcon>替换<Caret $ml={9} /></SmallRow>
            <SmallRow><SmallIcon><Pointer /></SmallIcon>选择<Caret $ml={3} /></SmallRow>
          </SmallCol>
        </GroupBody>
        <GroupLabel>编辑</GroupLabel>
      </Group>
      <RibbonEnd>
        <Ico w={9} h={6}><path d="M.5 5 4.500 1l4 4" stroke="#fff" strokeWidth="1.800" /></Ico>
      </RibbonEnd>
    </Ribbon>

    <Workspace>
      <Sidebar>
        {thumbArt.map((art, i) => (
          <ThumbRow key={i}>
            <ThumbNum>{i + 1}</ThumbNum>
            <Thumb $active={i === 4}>{art}</Thumb>
          </ThumbRow>
        ))}
      </Sidebar>
      <Editor>
        <Canvas>
          <Slide>
            <SlideTitle>本年度各季度生产量呈上涨趋势</SlideTitle>
            <SlideBody>经过技术引进和管理提升，我公司本年各季度生产力获得飞速发展，产量稳步上升，在同行中排名第一，完全满足各大商家的订单需求。</SlideBody>
            <Chart />
          </Slide>
        </Canvas>
        <ScrollCol>
          <ScrollBtn><CaretUp /></ScrollBtn>
          <ScrollTrack><ScrollThumb /></ScrollTrack>
          <ScrollBtn><Caret /></ScrollBtn>
          <PageJump $mt={6}><DoubleUp /></PageJump>
          <PageJump $mt={6}><DoubleDown /></PageJump>
        </ScrollCol>
      </Editor>
      <Pane>
        <PaneHead>
          <PaneTitle>设置背景格式</PaneTitle>
          <PaneCaret />
          <PaneClose><CloseX s={10} sw={2} /></PaneClose>
        </PaneHead>
        <PaneTabs>
          <Bucket />
          <Notch width="14" height="9" viewBox="0 0 14 9" fill="none">
            <path d="M0 8.500h1L6.500 1 12 8.500h2" stroke="#e0e0e0" />
          </Notch>
        </PaneTabs>
        <SectionHead>
          <Ico w={6} h={6}><path d="M6 0v6H0z" fill="#9a9a9a" /></Ico>
          填充
        </SectionHead>
        <Options>
          {options.map(([t, k, on]) => (
            <Option key={k}><Radio $on={on} /><span>{t}(<Acc>{k}</Acc>)</span></Option>
          ))}
          <Option><Check /><span>隐藏背景图形(<Acc>H</Acc>)</span></Option>
        </Options>
        <PaneSep />
        <FieldRow $h={27} $mt={7}>
          <FieldLabel $w={60}>颜色(<Acc>C</Acc>)</FieldLabel>
          <ColorBtn>
            <BucketSmall c="#f0f0f0" bar="#fff" drop="#3a8ad8" />
            <Caret />
          </ColorBtn>
        </FieldRow>
        <FieldRow $h={26} $mt={6}>
          <FieldLabel $w={60}>透明度(<Acc>T</Acc>)</FieldLabel>
          <Slider />
          <Spin>
            0%
            <SpinArrows><CaretUp /><Caret /></SpinArrows>
          </Spin>
        </FieldRow>
        <PaneFoot>
          <FootBtn $w={92}>应用到全部(<Acc>L</Acc>)</FootBtn>
          <FootBtn $w={82}>重置背景(<Acc>B</Acc>)</FootBtn>
        </PaneFoot>
      </Pane>
    </Workspace>

    <Status>
      <StatusLeft>幻灯片 第 5 张，共 5 张</StatusLeft>
      <Slot $w={16} $ml={18}><Proof /></Slot>
      <Lang>中文(中国)</Lang>
      <StatusRight>
        <StatusAction $w={61}><NotesIco />备注</StatusAction>
        <StatusAction $w={60}><CommentIco />批注</StatusAction>
        <ViewBtn $active><NormalView /></ViewBtn>
        <ViewBtn><SorterView /></ViewBtn>
        <ViewBtn><ReadingView /></ViewBtn>
        <ViewBtn><ShowView /></ViewBtn>
        <ZoomBar><ZoomMinus /><ZoomLine /></ZoomBar>
      </StatusRight>
    </Status>
    <Ime>
      <ImeMode>通</ImeMode>
      <ImeText>中</ImeText>
      <Ico w={15} h={15}>
        <path d="M10 0c1 6-3 10-9 10 2 4 13 5 13-3 0-3-2-6-4-7z" fill="currentColor" />
      </Ico>
      <Ico w={15} h={15}>
        <circle cx="4" cy="8" r="1.800" stroke="currentColor" />
        <path d="M11 7h2.500v2l-2 3" stroke="currentColor" strokeWidth="1.500" />
      </Ico>
      <Ico w={15} h={11}>
        <rect x=".5" y=".5" width="14" height="10" rx="1" stroke="currentColor" />
        <path d="M3 3h9M3 5.500h9" stroke="currentColor" strokeDasharray="1 1" />
        <path d="M4 8h7" stroke="currentColor" />
      </Ico>
      <Ico w={14} h={15}>
        <path d="M7 0v15" stroke="currentColor" strokeWidth="1.500" />
        <path d="M0 7.500 5 3v9zM14 7.500 9 3v9z" fill="currentColor" />
      </Ico>
      <Ico w={15} h={15}>
        <path d="M14 3.500 11.500 6 9.500 4.500 11.500 1C8.500 0 6 2.500 7 5.500L.5 12c-1 2 1 3.500 2.500 2.500L9.500 8c3 1 5.500-1.500 4.500-4.500z" fill="currentColor" />
      </Ico>
    </Ime>
  </Page>
)

export default App
